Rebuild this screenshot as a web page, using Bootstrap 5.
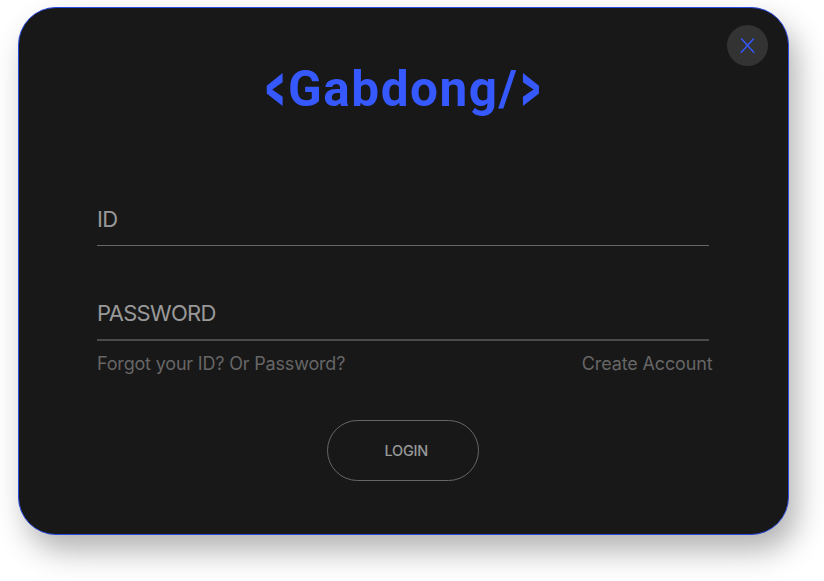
<!DOCTYPE html>
<html lang="en">
<head>
<meta charset="utf-8">
<meta name="viewport" content="width=device-width, initial-scale=1">
<title>Gabdong</title>
<link href="https://cdn.jsdelivr.net/npm/bootstrap@5.3.0/dist/css/bootstrap.min.css" rel="stylesheet">
<style>
body { height: 581px; padding: 7px 0 0 18px; font-family: Inter, "Liberation Sans", sans-serif; background: #fff; }
.login-panel { width: 770.5px; height: 528px; padding: 0 78px; background: #181818; border: 1px solid #2b4be0; border-radius: 38px; box-shadow: 8px 16px 30px rgba(0,0,0,.3); }
.brand { margin-top: 51px; height: 60px; font-family: Roboto, Inter, sans-serif; font-size: 49.5px; line-height: 60px; font-weight: 700; letter-spacing: 1.5px; color: #3658ff; white-space: nowrap; }
.bracket { display: inline-block; width: 22px; transform: translate(-3px, -2px) scale(.76, 1.42); }
.bracket-end { transform: translate(0, -2px) scale(.76, 1.42); }
.field { width: 612px; height: 52px; border-bottom: 1px solid #666; }
.field-id { margin-top: 75px; }
.field-pw { margin-top: 42px; height: 53px; border-bottom: 2px solid #4a4a4a; }
.field label { font-size: 22px; line-height: 50px; letter-spacing: -.72px; color: #999; }
.helper { margin-top: 9px; margin-right: -3px; font-size: 18px; line-height: 28px; letter-spacing: -.18px; color: #666; }
.create { letter-spacing: -.14px; }
.btn-login { margin-top: 42px; margin-right: 1px; width: 152px; height: 61px; border: 1px solid #666; border-radius: 31px; font-size: 14.5px; font-weight: 500; letter-spacing: -.2px; color: #999; }
.btn-login span { margin-left: 7px; }
.btn-dismiss { position: absolute; top: 17px; right: 19.5px; width: 41px; height: 41px; background: #333; border: 0; }
</style>
</head>
<body class="overflow-hidden">
<main class="login-panel position-relative">
  <button class="btn-dismiss rounded-circle p-0 d-flex align-items-center justify-content-center" type="button" aria-label="Close">
    <svg width="41" height="41" viewBox="0 0 41 41" fill="none" stroke="#3658ff" stroke-width="1.4"><path d="M14.2 13.5 27.2 27.8M26.8 13.5 13.9 27.8"/></svg>
  </button>
  <form class="d-flex flex-column">
    <h1 class="brand mb-0 align-self-center"><span class="bracket">&lt;</span>Gabdong/<span class="bracket bracket-end">&gt;</span></h1>
    <div class="field field-id"><label>ID</label></div>
    <div class="field field-pw"><label>PASSWORD</label></div>
    <div class="helper d-flex justify-content-between"><span class="forgot">Forgot your ID? Or Password?</span><span class="create">Create Account</span></div>
    <button class="btn btn-login align-self-center p-0" type="button"><span>LOGIN</span></button>
  </form>
</main>
<script src="https://cdn.jsdelivr.net/npm/bootstrap@5.3.0/dist/js/bootstrap.bundle.min.js"></script>
</body>
</html>
